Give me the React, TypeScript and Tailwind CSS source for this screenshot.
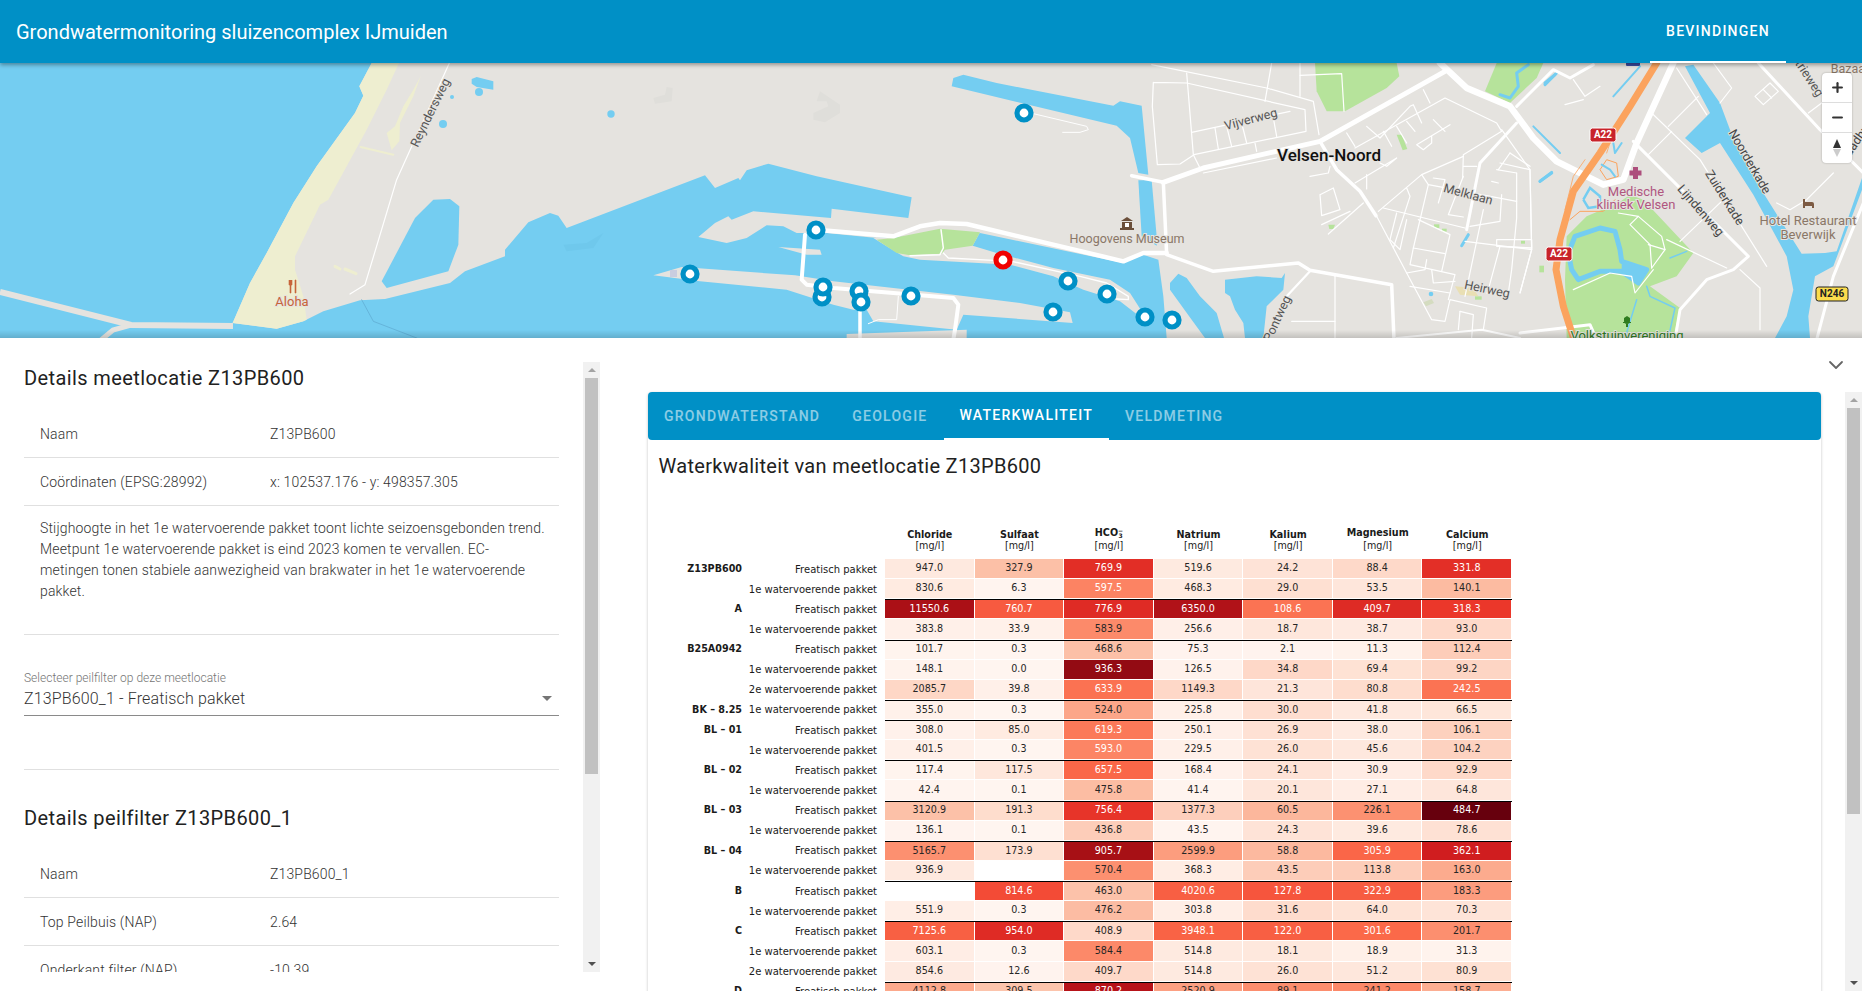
import React from 'react'
import { ChevronDown, Plus, Minus } from 'lucide-react'

const WATER = '#74cdf1'
const LAND = '#e5e3df'
const PARK = '#b6e39b'
const SAND = '#eeeed0'
const ORANGE = '#fba35e'

// zoom coordinates (3x) to page coordinates
const P = (ox: number, s: string) =>
  s
    .trim()
    .split(/\s+/)
    .map((p) => {
      const [x, y] = p.split(',').map(Number)
      return `${ox + x / 3},${63 + y / 3}`
    })
    .join(' ')

const Poly = ({ ox, d, fill }: { ox: number; d: string; fill: string }) => <polygon points={P(ox, d)} fill={fill} />
const Line = ({ ox, d, w = 1, c = '#fff' }: { ox: number; d: string; w?: number; c?: string }) => (
  <polyline
    points={P(ox, d)}
    fill="none"
    stroke={c}
    strokeWidth={w}
    strokeLinecap="round"
    strokeLinejoin="round"
  />
)

const thinZ9 = [
  '95,5 440,75 580,115 597,215',
  '200,30 220,275 240,315',
  '100,58 97,130 112,305 180,303 222,275 558,205 555,140 200,60 100,58',
  '215,208 510,145',
  '285,195 295,258',
  '320,190 335,250',
  '365,180 380,240',
  '460,165 470,220',
  '405,240 410,265',
  '250,330 470,285',
  '455,0 435,115',
  '540,0 540,100',
  '540,37 665,32 672,145',
  '910,80 930,120',
  '680,210 705,250',
  '705,255 975,105 1130,180 1145,205 1030,275 1028,345',
  '740,190 780,225 870,130 880,125 905,180',
  '790,205 815,250',
  '830,190 860,240',
  '860,175 885,205',
  '940,170 975,205',
  '990,185 890,245 910,260 935,240 935,220',
  '705,360 830,285 800,310 780,300',
  '740,335 740,378',
  '570,340 625,330 630,310',
  '600,395 640,375 660,440 605,458 600,395',
  '605,485 690,445',
  '625,513 730,420',
  '775,445 905,335 1030,280',
  '770,460 860,630 935,770 975,775 990,710 1100,735 1090,800',
  '790,435 1035,495',
  '830,450 810,530 840,560 860,470',
  '860,375 870,400 820,555',
  '925,365 880,555 870,605 1005,635 985,710',
  '880,555 975,572',
  '895,470 990,515 965,625',
  '920,590 915,620 860,630',
  '935,620 940,660 1005,655',
  '870,670 990,690',
  '905,335 925,365 1190,415',
  '940,345 975,350 955,420',
  '1030,340 985,455 1030,462',
  '1030,310 1070,310',
  '1035,535 1235,560',
  '1090,440 1035,700',
  '1145,395 1140,475 1050,490',
  '1190,330 1190,465 1175,620 1165,690 1100,690',
  '1140,550 1105,680',
  '1130,530 1235,530 1235,555 1130,550 1130,530',
  '1145,200 1230,320 1235,560 1200,690',
  '1130,320 1190,330',
  '1170,270 1230,310',
  '1135,320 1170,270',
  '1115,355 1135,360',
  '1020,745 1060,755 1055,825',
  '1020,745 1015,800',
  '645,640 645,825',
  '515,775 645,775',
]

const thinZ10 = [
  '455,150 600,290 800,610',
  '505,190 595,100',
  '445,275 515,205',
  '540,535 670,410',
  '640,0 695,75 660,120',
  '530,15 620,155',
  '765,100 810,60 835,85 790,125 765,100',
  '790,80 815,105',
  '925,150 965,120',
  '830,420 870,440 920,410 1000,330',
  '355,450 415,460 485,520 495,560 455,615',
  '415,460 390,485 450,545 455,615',
  '445,545 495,560',
  '220,680 330,630 395,640 405,690 460,620',
  '500,530 680,615',
  '720,620 780,675 780,800',
  '0,300 90,320 95,560 60,690',
  '0,550 95,555',
  '220,50 255,100 300,70',
  '195,125 250,110',
]

const waterStrokesZ10 = [
  { d: '340,100 420,10', w: 2 },
  { d: '135,60 165,35', w: 3 },
  { d: '120,355 155,330', w: 3 },
  { d: '105,195 180,270', w: 1 },
  { d: '410,710 375,825', w: 1.5 },
  { d: '440,670 450,700 525,735 505,825', w: 1.5 },
  { d: '510,585 560,565', w: 1.5 },
]

const markers: [number, number, string?][] = [
  [1024, 113],
  [816, 230],
  [690, 274],
  [822, 297],
  [823, 287],
  [859, 291],
  [861, 302],
  [911, 296],
  [1003, 260, '#f00000'],
  [1068, 281],
  [1107, 294],
  [1053, 312],
  [1145, 317],
  [1172, 320],
]

const MapLabel = ({
  x,
  y,
  r = 0,
  size = 12.5,
  color = '#444',
  weight = 400,
  children,
}: {
  x: number
  y: number
  r?: number
  size?: number
  color?: string
  weight?: number
  children: React.ReactNode
}) => (
  <text
    x={x}
    y={y}
    fontSize={size}
    fill={color}
    fontWeight={weight}
    textAnchor="middle"
    dominantBaseline="middle"
    fontFamily="Roboto, sans-serif"
    transform={r ? `rotate(${r} ${x} ${y})` : undefined}
    stroke="#e5e3df"
    strokeWidth={2}
    paintOrder="stroke"
  >
    {children}
  </text>
)

const Badge = ({ x, y, label, yellow }: { x: number; y: number; label: string; yellow?: boolean }) => (
  <g>
    <rect
      x={x - (yellow ? 16 : 13)}
      y={y - 7}
      width={yellow ? 32 : 26}
      height={14}
      rx={2.5}
      fill={yellow ? '#fbdc4d' : '#c8232a'}
      stroke={yellow ? '#222' : '#fff'}
      strokeWidth={1}
    />
    <text
      x={x}
      y={y + 0.5}
      fontSize={10}
      fontWeight={700}
      fill={yellow ? '#222' : '#fff'}
      textAnchor="middle"
      dominantBaseline="middle"
      fontFamily="Roboto, sans-serif"
    >
      {label}
    </text>
  </g>
)

const MapCanvas = () => (
  <svg className="block w-full h-full" viewBox="0 63 1862 275" preserveAspectRatio="none">
    <rect x="0" y="63" width="1862" height="275" fill={LAND} />

    {/* zee en havenbekken */}
    <polygon
      fill={WATER}
      points={[
        P(200, '515,0 478,70 490,98 465,150 350,310 280,420 200,570 150,660 98,780 230,797 310,775 370,745 480,712 555,708 750,660 795,625 915,580 915,560 985,478 1050,450 1075,458 1100,495 1515,337'),
        P(620, '285,375 355,345 360,352 380,322 445,302 590,340 875,403 865,465 635,437 633,465 400,445 335,470 325,460 285,480 235,522 320,540 380,525 440,487 490,490 530,510 620,510 770,525 1080,510 1510,600'),
        P(1120, '70,575 115,590 130,700 140,825'),
        '1167,338 0,338 0,63',
      ].join(' ')}
    />

    {/* strand */}
    <Poly ox={200} fill={SAND} d="515,0 478,70 490,98 465,150 350,310 280,420 200,570 150,660 98,780 230,797 310,775 320,770 310,700 285,620 285,580 360,425 385,410 440,310 500,200 560,80 597,0" />
    <Poly ox={200} fill={SAND} d="662,40 640,100 600,180 598,235 575,262 560,210 585,190 610,130 640,80" />
    <Line ox={200} d="482,252 580,275" w={2} c={SAND} />
    <Line ox={200} d="405,610 420,618" w={3} c={SAND} />
    <Line ox={200} d="435,618 468,632" w={3} c={SAND} />

    {/* pier links */}
    <polyline points="0,292 131,325 233,326" fill="none" stroke={LAND} strokeWidth={6} />
    <polyline points="131,325 113,330 95,345" fill="none" stroke={LAND} strokeWidth={5} />
    <Line ox={200} d="485,710 520,775 650,825" w={0.7} c="#5fa9d0" />

    {/* plassen */}
    <Poly ox={200} fill={WATER} d="545,655 645,465 700,410 750,408 778,430 775,545 745,625 560,675" />
    <Poly ox={200} fill={WATER} d="815,48 830,42 880,55 880,80 830,72 815,62" />
    <circle cx={479} cy={92} r={4} fill={WATER} />
    <circle cx={452} cy={97} r={2} fill={WATER} />
    <circle cx={443} cy={124} r={4} fill={WATER} />
    <circle cx={611} cy={114} r={3.7} fill={WATER} />

    {/* donkere vlakken */}
    <Poly ox={620} fill="#dfdeda" d="100,105 135,95 140,72 158,75 155,115 105,122" />
    <Poly ox={620} fill="#dfdeda" d="600,85 660,125 660,150 615,178 580,170 580,150 625,130 620,115 590,115" />
    <Poly ox={620} fill="#6fc8ec" d="-170,545 -100,540 -50,510 -80,555 -160,565" />

    {/* kanalen noord */}
    <Poly ox={620} fill={WATER} d="995,70 1000,45 1030,35 1130,60 1480,128 1500,115 1565,128 1585,335 1555,330 1530,225 1490,188" />
    <Poly ox={1120} fill={WATER} d="55,352 95,352 110,520 110,548 65,520" />
    <Poly ox={1120} fill={WATER} d="150,660 175,632 200,645 240,700 290,750 312,825 255,825 215,770 150,680" />
    <Poly ox={1120} fill={WATER} d="315,650 410,640 485,645 495,630 490,680 440,730 430,825 375,825 370,780 345,740 330,700 315,690" />

    {/* pieren */}
    <Poly ox={620} fill={LAND} d="100,637 185,612 525,637 640,655 1000,695 1200,720 1350,748 1358,780 1030,755 1010,800 760,775 740,740 700,740 640,725 500,680 240,655" />
    <Poly ox={620} fill={LAND} d="680,813 1040,800 1040,830 680,830" />
    <Poly ox={620} fill={LAND} d="475,552 600,560 605,575 560,575" />
    <Poly ox={620} fill={LAND} d="760,525 830,525 960,495 1080,508 1058,548 1130,570 1300,615 1470,650 1530,690 1565,745 1565,765 1500,715 1390,680 1300,640 1170,605 900,590 850,580 800,550" />
    <Poly ox={620} fill={PARK} d="770,530 820,525 960,497 1080,508 1058,548 975,560 965,572 870,577 830,570" />
    <rect x={670} y={270} width={7} height={7} fill="#c9cde0" />

    {/* park en groen */}
    <Poly ox={1120} fill={PARK} d="585,0 830,0 838,40 800,75 675,145 620,145 590,85" />
    <Poly ox={1120} fill={PARK} d="1130,0 1270,0 1250,45 1170,120 1095,85" />
    <Line ox={1120} d="1225,5 1190,30 1195,70 1170,105 1140,95" w={3} c={WATER} />
    <Poly ox={1500} fill={PARK} d="200,520 260,460 355,420 390,395 430,410 580,570 530,640 450,670 540,735 520,825 200,825 195,650" />
    <polyline
      points={P(1500, '205,570 225,520 300,495 345,505 360,560 365,595 440,620 415,660 365,625 300,625 235,650 215,620 205,570')}
      fill="none"
      stroke={WATER}
      strokeWidth={5}
      strokeLinejoin="round"
    />
    <Poly ox={1500} fill={WATER} d="365,590 440,620 415,660 365,625" />
    <Poly ox={1120} fill={PARK} d="830,215 845,215 862,258 848,262" />
    <Poly ox={1120} fill={PARK} d="625,485 645,485 640,498 628,498" />
    <Poly ox={1120} fill={PARK} d="942,484 958,484 958,495 942,495" />
    <Poly ox={1120} fill={PARK} d="966,497 980,497 980,506 966,506" />
    <Poly ox={1120} fill={PARK} d="1203,533 1215,533 1215,542 1203,542" />
    <Poly ox={1120} fill={PARK} d="1258,608 1272,608 1272,628 1258,628" />
    <Poly ox={1120} fill={PARK} d="1065,700 1085,700 1085,710 1065,710" />
    <Poly ox={1120} fill="#d4dcc0" d="910,718 935,708 942,720 918,730" />
    <Poly ox={1120} fill="#e9dfb3" d="1005,670 1060,675 1075,700 1020,695" />
    <circle cx={1431} cy={294} r={2.3} fill={WATER} />

    {/* kanaal rechts */}
    <Poly ox={1500} fill={WATER} d="555,10 580,5 660,120 690,200 735,290 790,390 905,572 975,570 1010,565 1086,345 1086,380 1000,610 945,640 925,760 930,825 825,825 860,760 880,680 860,580 760,395 660,240 605,270 555,225 630,150" />
    <Line ox={1120} d="1240,190 1320,270" w={2} c={WATER} />
    <Line ox={1120} d="1025,548 1045,515" w={3} c={WATER} />
    <Line ox={1120} d="1260,355 1295,328" w={3} c={WATER} />
    <Line ox={1120} d="1275,65 1310,30" w={3} c={WATER} />

    {/* kleine wegen */}
    {thinZ9.map((d) => (
      <Line key={d} ox={1120} d={d} w={1.2} />
    ))}
    {thinZ10.map((d) => (
      <Line key={d} ox={1500} d={d} w={1.2} />
    ))}
    {waterStrokesZ10.map((s) => (
      <Line key={s.d} ox={1500} d={s.d} w={s.w} c={WATER} />
    ))}
    <Line ox={200} d="748,0 590,350 495,665 450,693" w={1.2} />
    <Line ox={620} d="1240,152 1400,190 1405,200 1380,208 1328,208" w={1} />
    <Line ox={620} d="870,578 960,575 970,555 963,500" w={1.5} />
    <Line ox={620} d="970,570 985,585 1120,592" w={1.3} />
    <Line ox={620} d="1175,595 1380,640 1460,660 1525,700 1525,710 1490,708" w={1.3} />
    <Line ox={620} d="835,700 830,770 775,770 745,782" w={1} />

    {/* hoofdwegen */}
    <Line ox={620} d="588,500 820,520 900,490 960,480 1040,483 1510,595 1570,570 1640,570" w={4.5} />
    <Line ox={620} d="555,515 545,650 560,665 640,675 1000,705 1015,725 1005,800 1000,830" w={4} />
    <Line ox={620} d="720,740 720,830" w={3.5} />
    <Line ox={1120} d="130,358 250,315 600,235 975,25" w={5} />
    <Line ox={1120} d="35,338 130,358 140,575 280,625 535,600 570,622 815,665 822,830" w={3.5} />
    <Line ox={1120} d="570,625 500,700 440,825" w={2.2} />
    <Line ox={1120} d="600,235 650,320 720,385 768,458" w={3.5} />
    <Line ox={1120} d="1190,180 1080,300 1040,500" w={3} />
    <Line ox={1120} d="1190,130 1300,20 1350,45 1420,5" w={3} />
    <Line ox={1120} d="830,825 1085,800 1200,825" w={2} />
    <Line ox={1120} d="960,0 1040,75 1170,130 1240,225 1310,295 1450,365 1510,350 1550,240 1660,0" w={6.5} />
    <Line ox={1500} d="400,235 745,580 700,620 620,650 540,740 525,830" w={3} />
    <Line ox={1500} d="775,0 960,200 1090,330" w={3} />
    <Line ox={1500} d="1090,420 1000,640 950,830" w={3} />
    <Line ox={1500} d="60,810 270,785 290,830" w={3} />

    {/* A22 */}
    <Line ox={1500} d="255,290 220,340 195,440" w={0.8} c={ORANGE} />
    <Line ox={1500} d="350,180 320,270" w={0.8} c={ORANGE} />
    <Line ox={1500} d="210,470 240,445 310,445 345,410" w={1} c={ORANGE} />
    <polyline
      points={P(1500, '300,320 320,290 350,300 355,340 320,350 300,320')}
      fill="none"
      stroke={ORANGE}
      strokeWidth={1}
    />
    <polyline
      points={P(1500, '250,410 270,375 300,400 300,430 265,435 250,410')}
      fill="none"
      stroke={WATER}
      strokeWidth={2.5}
    />
    <Line ox={1500} d="305,305 330,320 345,340" w={2} c={WATER} />
    <Line ox={1500} d="340,240 345,270 365,240" w={2} c={WATER} />
    <Line ox={1500} d="470,0 390,130 300,270 220,385 180,530 168,620 190,730 222,830" w={7} c={ORANGE} />

    {/* iconen */}
    <path d="M1121 221l6-4 6 4zM1122 222h10v6h-10zM1120 228h14v2h-14z" fill="#6b4f3a" />
    <rect x={1125} y={223} width={4} height={4} fill="#fff" />
    <rect x={1633} y={167} width={5} height={12} fill="#ad4e7c" />
    <rect x={1629.5} y={170.5} width={12} height={5} fill="#ad4e7c" />
    <path d="M1803 204v-5h2v3h7a2 2 0 0 1 2 2v4h-2v-2h-7v2h-2z" fill="#7d5b43" />
    <path d="M289 280v5h1v8h1v-8h1v-5M295 280v13h1v-13z" fill="#c8643a" stroke="#c8643a" strokeWidth={0.6} />
    <path d="M1627 316l3 2v3a3 3 0 0 1-6 0v-3zM1623 322h8v1h-3v4h-2v-4h-3z" fill="#2f7d1f" />

    {/* labels */}
    <MapLabel x={431} y={113} r={-64} color="#555">Reyndersweg</MapLabel>
    <MapLabel x={292} y={303} color="#c8643a" size={13}>Aloha</MapLabel>
    <MapLabel x={1127} y={240} color="#8a7767" size={12.5}>Hoogovens Museum</MapLabel>
    <MapLabel x={1329} y={157} size={17} weight={500} color="#111">Velsen-Noord</MapLabel>
    <MapLabel x={1251} y={120} r={-15} color="#555">Vijverweg</MapLabel>
    <MapLabel x={1468} y={195} r={15} color="#555">Melklaan</MapLabel>
    <MapLabel x={1487} y={290} r={12} color="#555">Heirweg</MapLabel>
    <MapLabel x={1278} y={319} r={-65} color="#555">Pontweg</MapLabel>
    <MapLabel x={1636} y={193} size={13} color="#b0567f">Medische</MapLabel>
    <MapLabel x={1636} y={206} size={13} color="#b0567f">kliniek Velsen</MapLabel>
    <MapLabel x={1700} y={211} r={49} color="#444">Lijndenweg</MapLabel>
    <MapLabel x={1724} y={198} r={58} color="#444">Zuiderkade</MapLabel>
    <MapLabel x={1749} y={162} r={60} color="#444">Noorderkade</MapLabel>
    <MapLabel x={1808} y={222} size={13} color="#8a7767">Hotel Restaurant</MapLabel>
    <MapLabel x={1808} y={236} size={13} color="#8a7767">Beverwijk</MapLabel>
    <MapLabel x={1807} y={76} r={57} color="#555">strieweg</MapLabel>
    <MapLabel x={1850} y={70} color="#8a7767">Bazaar</MapLabel>
    <MapLabel x={1858} y={140} r={-55} color="#444">Raadhuis</MapLabel>
    <MapLabel x={1627} y={337} size={13} color="#2f7d1f">Volkstuinvereniging</MapLabel>

    <Badge x={1603} y={135} label="A22" />
    <Badge x={1559} y={254} label="A22" />
    <Badge x={1832} y={294} label="N246" yellow />
    <rect x={1626} y={56} width={14} height={10} rx={1} fill="#3b4ba0" />

    {/* meetlocaties */}
    {markers.map(([x, y, c]) => (
      <circle key={`${x}-${y}`} cx={x} cy={y} r={7} fill="#fff" stroke={c ?? '#0090c6'} strokeWidth={5.2} />
    ))}
  </svg>
)

const ZoomControl = () => (
  <div className="absolute top-[10px] right-[10px] w-[30px] bg-white rounded-[4px] shadow-[0_0_2px_rgba(0,0,0,0.3)] flex flex-col divide-y divide-[#ddd]">
    <div className="h-[30px] flex items-center justify-center">
      <Plus size={15} strokeWidth={3.5} color="#333" />
    </div>
    <div className="h-[30px] flex items-center justify-center">
      <Minus size={15} strokeWidth={3.5} color="#333" />
    </div>
    <div className="h-[30px] flex items-center justify-center">
      <svg width="10" height="20" viewBox="0 0 10 20">
        <path d="M5 1l4 9H1z" fill="#333" />
        <path d="M5 19l4-8H1z" fill="#ccc" />
      </svg>
    </div>
  </div>
)

const Scrollbar = ({ thumb, gap }: { thumb: string; gap?: string }) => (
  <div className={`w-[17px] shrink-0 bg-[#f1f1f1] flex flex-col ${gap ?? ''}`}>
    <div className="h-[16px] flex items-center justify-center shrink-0">
      <div className="w-0 h-0 border-x-[4px] border-x-transparent border-b-[4px] border-b-[#a3a3a3]" />
    </div>
    <div className={`mx-[2px] bg-[#c1c1c1] shrink-0 ${thumb}`} />
    <div className="flex-1" />
    <div className="h-[16px] flex items-center justify-center shrink-0">
      <div className="w-0 h-0 border-x-[4px] border-x-transparent border-t-[4px] border-t-[#505050]" />
    </div>
  </div>
)

const InfoRow = ({ label, value }: { label: string; value: string }) => (
  <div className="h-12 shrink-0 flex items-center border-b border-[#e0e0e0] pl-4 text-sm tracking-[0.15px] text-[#333] font-light">
    <div className="w-[230px]">{label}</div>
    <div>{value}</div>
  </div>
)

const DetailsPanel = () => (
  <div className="w-[600px] shrink-0 flex pt-6">
    <div className="w-[583px] h-[610px] overflow-hidden pl-6 pr-6">
      <h2 className="h-8 mb-4 flex items-center text-xl tracking-[0.4px] text-[#212121]">
        Details meetlocatie Z13PB600
      </h2>
      <InfoRow label="Naam" value="Z13PB600" />
      <InfoRow label="Coördinaten (EPSG:28992)" value="x: 102537.176 - y: 498357.305" />
      <div className="border-b border-[#e0e0e0] pt-3 pb-8 pl-4 pr-3 text-sm leading-[21px] tracking-[0.15px] text-[#333] font-light">
        Stijghoogte in het 1e watervoerende pakket toont lichte seizoensgebonden trend. Meetpunt 1e watervoerende
        pakket is eind 2023 komen te vervallen. EC-metingen tonen stabiele aanwezigheid van brakwater in het 1e
        watervoerende pakket.
      </div>
      <div className="mt-9 text-xs leading-[14px] text-[#757575] font-light">Selecteer peilfilter op deze meetlocatie</div>
      <div className="mt-px h-[30px] pb-[4px] border-b border-[#8a8a8a] flex items-center justify-between text-base tracking-[0.15px] text-[#333] font-light">
        <span>Z13PB600_1 - Freatisch pakket</span>
        <div className="mr-[7px] w-0 h-0 border-x-[5px] border-x-transparent border-t-[5px] border-t-[#757575]" />
      </div>
      <div className="mt-[53px] border-b border-[#e0e0e0]" />
      <h2 className="mt-8 h-8 mb-4 flex items-center text-xl tracking-[0.4px] text-[#212121]">
        Details peilfilter Z13PB600_1
      </h2>
      <InfoRow label="Naam" value="Z13PB600_1" />
      <InfoRow label="Top Peilbuis (NAP)" value="2.64" />
      <InfoRow label="Onderkant filter (NAP)" value="-10.39" />
    </div>
    <Scrollbar thumb="h-[396px]" gap="h-[610px]" />
  </div>
)

const STOPS = ['#fff5f0', '#fee0d2', '#fcbba1', '#fc9272', '#fb6a4a', '#ef3b2c', '#cb181d', '#a50f15', '#67000d']

const toRgb = (h: string) => [1, 3, 5].map((i) => parseInt(h.slice(i, i + 2), 16))

// seaborn 'Reds'
const reds = (t: number) => {
  const c = Math.min(Math.max(t, 0), 1) * 8
  const i = Math.min(Math.floor(c), 7)
  const a = toRgb(STOPS[i])
  const b = toRgb(STOPS[i + 1])
  const rgb = a.map((v, k) => Math.round(v + (b[k] - v) * (c - i)))
  return `rgb(${rgb.join(',')})`
}

// [min, span] per kolom
const SCALE: [number, number][] = [
  [0, 13500],
  [0, 1400],
  [307, 690],
  [0, 7600],
  [0, 230],
  [0, 600],
  [25, 460],
]

const COLUMNS = ['Chloride', 'Sulfaat', 'HCO', 'Natrium', 'Kalium', 'Magnesium', 'Calcium']

const F = 'Freatisch pakket'
const E1 = '1e watervoerende pakket'
const E2 = '2e watervoerende pakket'

type Row = [string, string, ...(number | null)[]]

const ROWS: Row[] = [
  ['Z13PB600', F, 947.0, 327.9, 769.9, 519.6, 24.2, 88.4, 331.8],
  ['', E1, 830.6, 6.3, 597.5, 468.3, 29.0, 53.5, 140.1],
  ['A', F, 11550.6, 760.7, 776.9, 6350.0, 108.6, 409.7, 318.3],
  ['', E1, 383.8, 33.9, 583.9, 256.6, 18.7, 38.7, 93.0],
  ['B25A0942', F, 101.7, 0.3, 468.6, 75.3, 2.1, 11.3, 112.4],
  ['', E1, 148.1, 0.0, 936.3, 126.5, 34.8, 69.4, 99.2],
  ['', E2, 2085.7, 39.8, 633.9, 1149.3, 21.3, 80.8, 242.5],
  ['BK – 8.25', E1, 355.0, 0.3, 524.0, 225.8, 30.0, 41.8, 66.5],
  ['BL – 01', F, 308.0, 85.0, 619.3, 250.1, 26.9, 38.0, 106.1],
  ['', E1, 401.5, 0.3, 593.0, 229.5, 26.0, 45.6, 104.2],
  ['BL – 02', F, 117.4, 117.5, 657.5, 168.4, 24.1, 30.9, 92.9],
  ['', E1, 42.4, 0.1, 475.8, 41.4, 20.1, 27.1, 64.8],
  ['BL – 03', F, 3120.9, 191.3, 756.4, 1377.3, 60.5, 226.1, 484.7],
  ['', E1, 136.1, 0.1, 436.8, 43.5, 24.3, 39.6, 78.6],
  ['BL – 04', F, 5165.7, 173.9, 905.7, 2599.9, 58.8, 305.9, 362.1],
  ['', E1, 936.9, null, 570.4, 368.3, 43.5, 113.8, 163.0],
  ['B', F, null, 814.6, 463.0, 4020.6, 127.8, 322.9, 183.3],
  ['', E1, 551.9, 0.3, 476.2, 303.8, 31.6, 64.0, 70.3],
  ['C', F, 7125.6, 954.0, 408.9, 3948.1, 122.0, 301.6, 201.7],
  ['', E1, 603.1, 0.3, 584.4, 514.8, 18.1, 18.9, 31.3],
  ['', E2, 854.6, 12.6, 409.7, 514.8, 26.0, 51.2, 80.9],
  ['D', F, 4112.8, 309.5, 870.2, 2520.9, 89.1, 241.2, 158.7],
]

const HeatCell = ({ value, col }: { value: number | null; col: number }) => {
  if (value === null) return <div className="flex-1 border-r border-b border-white" />
  const t = (value - SCALE[col][0]) / SCALE[col][1]
  return (
    <div
      className={`flex-1 flex items-center justify-center border-r border-b border-white ${
        t > 0.41 ? 'text-white' : 'text-[#262626]'
      }`}
      style={{ backgroundColor: reds(t) }}
    >
      {value.toFixed(1)}
    </div>
  )
}

const HeatTable = () => (
  <div className="font-['DejaVu_Sans',sans-serif] text-[9.6px] text-[#1a1a1a] w-[864px]">
    <div className="flex h-[67px] items-end pb-[7px]">
      <div className="w-[237px] shrink-0" />
      {COLUMNS.map((c) => (
        <div key={c} className="flex-1 text-center leading-[11.7px]">
          <div className={`font-bold ${c === 'HCO' || c === 'Magnesium' ? 'relative -top-[2px]' : ''}`}>
            {c}
            {c === 'HCO' && (
              <span className="inline-flex flex-col align-middle text-[6px] leading-[5px]">
                <span>−</span>
                <span>3</span>
              </span>
            )}
          </div>
          <div>[mg/l]</div>
        </div>
      ))}
    </div>
    {ROWS.map((r, i) => (
      <div key={i} className="flex h-[20.13px]">
        <div className="w-[94px] shrink-0 flex items-center justify-end font-bold whitespace-nowrap">{r[0]}</div>
        <div className="w-[135px] shrink-0 flex items-center justify-end whitespace-nowrap text-[10px]">{r[1]}</div>
        <div className="w-2 shrink-0" />
        <div className={`flex-1 flex box-border ${r[0] && i > 0 ? 'border-t border-black' : ''}`}>
          {(r.slice(2) as (number | null)[]).map((v, k) => (
            <HeatCell key={k} value={v} col={k} />
          ))}
        </div>
      </div>
    ))}
  </div>
)

const ChartPanel = () => (
  <div className="flex-1 min-w-0 flex flex-col">
    <div className="h-[54px] shrink-0 flex items-center justify-end pr-[14px]">
      <ChevronDown size={24} strokeWidth={1.8} color="#666" />
    </div>
    <div className="flex-1 flex min-h-0">
      <div className="flex-1 min-w-0 pl-12 pr-6">
        <div className="h-[700px] rounded-[4px] shadow-[0_1px_3px_rgba(0,0,0,0.25)] bg-white">
          <div className="h-12 bg-[#0090c6] rounded-[4px] flex text-sm font-medium tracking-[1.25px] text-white/55">
            <div className="px-4 flex items-center">GRONDWATERSTAND</div>
            <div className="px-4 flex items-center">GEOLOGIE</div>
            <div className="px-4 flex items-center text-white border-b-2 border-white">WATERKWALITEIT</div>
            <div className="px-4 flex items-center">VELDMETING</div>
          </div>
          <div className="pl-[10.5px]">
            <h3 className="h-[52px] flex items-center text-xl text-[#212121] tracking-[0.3px]">
              Waterkwaliteit van meetlocatie Z13PB600
            </h3>
          </div>
          <HeatTable />
        </div>
      </div>
      <Scrollbar thumb="h-[406px]" />
    </div>
  </div>
)

const App: React.FC = () => {
  return (
    <div className="h-[991px] overflow-hidden flex flex-col bg-white font-['Roboto',sans-serif]">
      <header className="relative z-10 h-[63px] shrink-0 bg-[#0090c6] shadow-[0_2px_4px_rgba(0,0,0,0.35)] flex items-center justify-between pl-4 pr-[76px] text-white">
        <h1 className="text-xl">Grondwatermonitoring sluizencomplex IJmuiden</h1>
        <div className="h-full w-[136px] flex items-center justify-center border-b-2 border-white text-sm font-medium tracking-[1.25px]">
          BEVINDINGEN
        </div>
      </header>

      <div className="relative h-[275px] shrink-0 overflow-hidden">
        <MapCanvas />
        <ZoomControl />
        <div className="absolute inset-x-0 bottom-0 h-2 bg-gradient-to-b from-transparent to-black/15" />
      </div>

      <div className="flex-1 flex min-h-0">
        <DetailsPanel />
        <ChartPanel />
      </div>
    </div>
  )
}

export default App
